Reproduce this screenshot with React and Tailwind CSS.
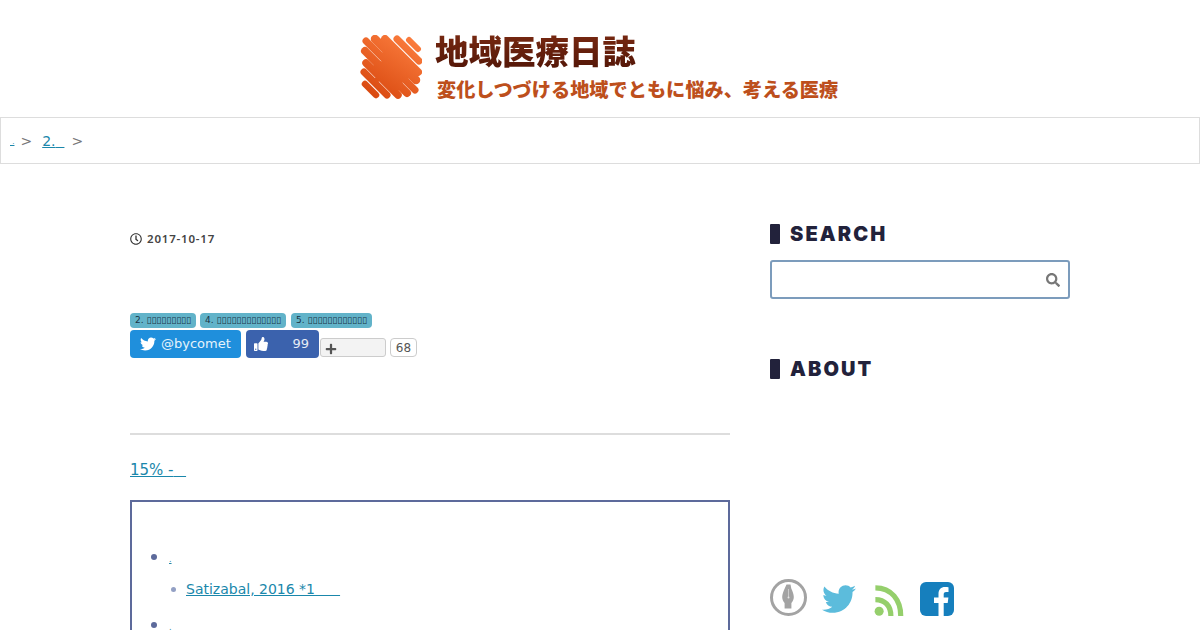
import { FaTwitter, FaSearch, FaThumbsUp, FaPlus, FaRegClock } from "react-icons/fa";

const Logo = () => (
  <svg width="62" height="66" viewBox="0 0 62 66" className="mt-[2px] shrink-0">
    <defs>
      <linearGradient id="mark" gradientUnits="userSpaceOnUse" x1="50" y1="4" x2="12" y2="62">
        <stop offset="0" stopColor="#fa7b3c" />
        <stop offset="1" stopColor="#d8480f" />
      </linearGradient>
    </defs>
    <g stroke="url(#mark)" strokeLinecap="round" fill="none">
      <path strokeWidth="6" d="M49 5 L58 14" />
      <path strokeWidth="7" d="M37 4 L59 26" />
      <path strokeWidth="8" d="M25 4 L58 37" />
      <path strokeWidth="8.5" d="M15 4 L56 45" />
      <path strokeWidth="7" d="M6 6 L55 55" />
      <path strokeWidth="8" d="M5 16 L47 58" />
      <path strokeWidth="7.5" d="M6 28 L38 60" />
      <path strokeWidth="7" d="M4 37 L27 60" />
      <path strokeWidth="6.5" d="M5 49 L16 60" />
      <path strokeWidth="16" d="M30 20 L46 36" />
      <path strokeWidth="14" d="M20 33 L36 49" />
      <path strokeWidth="5" d="M38 22 L14 48" />
    </g>
  </svg>
);

const NibIcon = () => (
  <svg width="37" height="37" viewBox="0 0 37 37">
    <circle cx="18.5" cy="18.5" r="17" fill="none" stroke="#a3a3a3" strokeWidth="3" />
    <path
      fill="#a3a3a3"
      d="M16.5 5.5h4l.8 4c1.4 3.2 2.5 5.8 2.5 8.4 0 2.4-1 4.4-2.4 6v5.6h-6.8v-5.6c-1.4-1.6-2.4-3.6-2.4-6 0-2.6 1.1-5.2 2.5-8.4z"
    />
    <path stroke="#d6d6d6" strokeWidth="0.8" d="M18.5 10v8" />
    <circle cx="18.5" cy="18.5" r="1" fill="#e5e5e5" />
  </svg>
);

const RssIcon = () => (
  <svg width="30" height="31" viewBox="0 0 31 33" fill="none">
    <circle cx="5" cy="28" r="4.8" fill="#95cf6c" />
    <path stroke="#95cf6c" strokeWidth="5.5" d="M1 15.5C11 15.5 17.5 22 17.5 33" />
    <path stroke="#95cf6c" strokeWidth="5.5" d="M1 3C18 3 28 16 28 33" />
  </svg>
);

const FacebookIcon = () => (
  <svg width="34" height="34" viewBox="0 0 34 34">
    <rect width="34" height="34" rx="6" fill="#167fbd" />
    <path
      fill="#fff"
      d="M18.5 34V21h-4.5v-5.5h4.5v-3.8C18.5 7.5 21 5 25 5c1.7 0 3 .1 3.5.2V10h-2.400c-1.900 0-2.400 1-2.400 2.300v3.200h4.700l-.7 5.500h-4V34z"
    />
  </svg>
);

const Tag = ({ label, width }) => (
  <span className={`flex h-[15px] items-center justify-center rounded-sm bg-[#62b3c9] text-[9px] leading-none text-[#1a3344] ${width}`}>
    {label}
  </span>
);

const Heading = ({ children }) => (
  <h2 className="flex h-5 items-center gap-[10px]">
    <span className="h-5 w-[10px] rounded-[1px] bg-[#22223b]" />
    <span className="font-['Inter',sans-serif] text-xl font-black tracking-[0.105em] text-[#22223b]">{children}</span>
  </h2>
);

const BoxItem = () => (
  <li className="flex h-[20px] items-center">
    <span className="h-[6px] w-[6px] rounded-full bg-[#5d6a9b]" />
    <a className="ml-3 mt-[5px] text-[8px] leading-none text-[#2a8aa8] underline">.</a>
  </li>
);

export default function App() {
  return (
    <div className="h-[630px] w-[1200px] overflow-hidden bg-white font-['DejaVu_Sans',sans-serif] text-[#555]">
      <header className="flex h-[117px] items-start pl-[360px] pt-[33px]">
        <Logo />
        <div className="ml-[13px] flex flex-col font-['Noto_Sans_CJK_JP',sans-serif] font-black">
          <div className="-mt-[2px] bg-gradient-to-b from-[#7a2a12] to-[#551708] bg-clip-text text-[33.5px] leading-[37px] text-transparent">
            地域医療日誌
          </div>
          <div className="ml-[2px] mt-[9px] text-[19.2px] leading-[24px] text-[#bd4f1c]">
            変化しつづける地域でともに悩み、考える医療
          </div>
        </div>
      </header>

      <nav className="flex h-[47px] items-center whitespace-pre border border-[#ddd] pl-[9px] text-sm text-[#777]">
        <a className="mt-[3px] text-[7px] text-[#1a87ab] underline">{"\u00a0."}</a>
        <span className="ml-[6px]">&gt;</span>
        <a className="ml-[10px] text-[#1a87ab] underline">2.{"\u00a0\u00a0"}</a>
        <span className="ml-[7px]">&gt;</span>
      </nav>

      <main className="flex gap-10 pl-[130px]">
        <article className="w-[600px]">
          <div className="mt-[68px] flex h-[14px] items-center gap-[5px] font-['Noto_Sans',sans-serif] text-[11.5px] font-semibold tracking-[0.07em] text-[#444]">
            <FaRegClock className="h-3 w-3 text-[#333]" />
            2017-10-17
          </div>

          <div className="mt-[67px] flex gap-1">
            <Tag width="w-[66px]" label="2. ▯▯▯▯▯▯▯▯▯" />
            <Tag width="w-[86px]" label="4. ▯▯▯▯▯▯▯▯▯▯▯▯▯" />
            <Tag width="w-[81px] ml-[1px]" label="5. ▯▯▯▯▯▯▯▯▯▯▯▯" />
          </div>

          <div className="mt-[2px] flex items-start">
            <a className="flex h-7 w-[111px] items-center rounded bg-[#1f8fdc] pl-[10px] text-[13px] text-[#e5f3fb]">
              <FaTwitter className="mr-[5px] h-4 w-4 text-white" />
              @bycomet
            </a>
            <a className="ml-[5px] flex h-7 w-[73px] items-center justify-between rounded bg-[#3b62ad] pl-[8px] pr-[10px] text-[13px] text-[#e5ebf5]">
              <FaThumbsUp className="h-[14px] w-[14px] text-white" />
              99
            </a>
            <div className="ml-[1px] mt-2 flex h-[19px] w-[66px] items-center rounded-[3px] border border-[#ccc] bg-[#f3f3f3] pl-[4px]">
              <FaPlus className="mt-[2px] h-3 w-3 text-[#555]" />
            </div>
            <div className="ml-[4px] mt-2 flex h-[19px] w-[27px] items-center justify-center rounded border border-[#ccc] bg-white text-xs text-[#555]">
              68
            </div>
          </div>

          <hr className="mt-[75px] border-t-2 border-[#ddd]" />

          <p className="mt-[25px] whitespace-pre text-[15px] leading-[20px]">
            <a className="text-[#1a87ab] underline">15% -{"\u00a0\u00a0\u2009"}</a>
          </p>

          <section className="mt-[20px] h-[200px] border-2 border-[#5d6a9b] pl-[19px] pt-[45px]">
            <ul>
              <BoxItem />
              <li className="mt-[7px] flex h-[30px] items-center pl-[20px]">
                <span className="h-[5px] w-[5px] rounded-full bg-[#93a0c4]" />
                <a className="ml-[10px] whitespace-pre text-sm text-[#1a87ab] underline">Satizabal, 2016 *1{"\u00a0\u00a0\u00a0\u00a0\u00a0\u2009"}</a>
              </li>
              <li className="mt-[11px]">
                <BoxItem />
              </li>
            </ul>
          </section>
        </article>

        <aside className="w-[300px] pt-[60px]">
          <Heading>SEARCH</Heading>
          <div className="mt-[16px] flex h-[39px] items-center justify-end rounded-[3px] border-2 border-[#7c9cbc] pr-[8px]">
            <FaSearch className="h-[14px] w-[14px] text-[#777]" />
          </div>
          <div className="mt-[60px]">
            <Heading>ABOUT</Heading>
          </div>
          <div className="mt-[200px] flex items-end">
            <NibIcon />
            <FaTwitter className="ml-[15px] h-[34px] w-[34px] text-[#5cbcdc]" />
            <div className="ml-[18px]">
              <RssIcon />
            </div>
            <div className="ml-[16px]">
              <FacebookIcon />
            </div>
          </div>
        </aside>
      </main>
    </div>
  );
}
